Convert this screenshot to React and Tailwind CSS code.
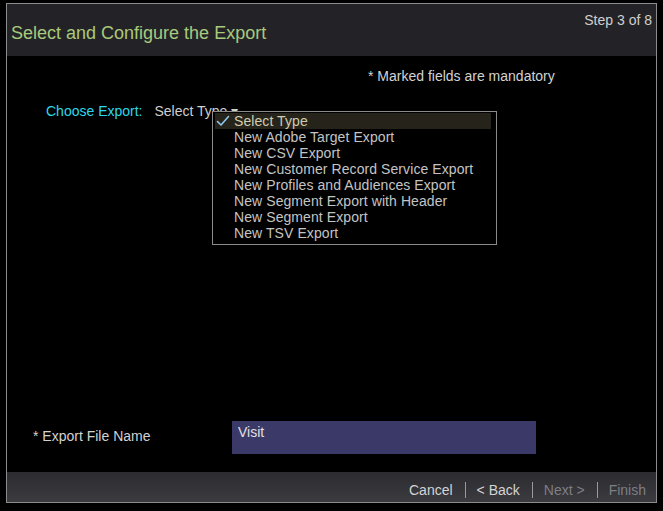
import React from "react";

const exportTypes = [
  "New Adobe Target Export",
  "New CSV Export",
  "New Customer Record Service Export",
  "New Profiles and Audiences Export",
  "New Segment Export with Header",
  "New Segment Export",
  "New TSV Export",
];

const App = () => {
  return (
    <div
      className="w-[663px] h-[511px] bg-black pt-[3px] pl-[6px] overflow-hidden"
      style={{ fontFamily: '"Liberation Sans", Arial, sans-serif' }}
    >
      <div className="w-[651px] h-[500px] border border-[#8c8c8c] flex flex-col">
        {/* Cabeçalho */}
        <div className="h-[52px] bg-[#232327] flex justify-between px-[4px]">
          <div className="text-[18px] leading-[22px] text-[#a9c97c] pt-[18px]">Select and Configure the Export</div>
          <div className="text-[14px] leading-[16px] text-[#cfcfcf] pt-[8px]">Step 3 of 8</div>
        </div>

        {/* Corpo */}
        <div className="flex-1 bg-black relative">
          <div className="text-[14px] leading-[16px] text-[#d2d2d2] pl-[361px] pt-[12px]">* Marked fields are mandatory</div>

          <div className="flex items-center text-[14px] leading-[16px] pl-[39px] mt-[19px]">
            <span className="text-[#2ad8ea]">Choose Export:</span>
            <span className="text-[#cfcfcf] ml-[12px]">Select Type ▾</span>
          </div>

          {/* Menu suspenso */}
          <div className="absolute left-[205px] top-[55px] w-[285px] h-[134px] border border-[#8a8a8a] bg-black py-[1px] pl-[2px] pr-[5px] text-[14px] leading-[16px] tracking-[0.08px]">
            <div className="flex items-center bg-[#26241a] text-[#d0ccb0]">
              <svg className="w-[14px] h-[12px] ml-[1px] mr-[4px]" viewBox="0 0 14 12" fill="none">
                <path d="M1.5 6.5 L5 10 L12.5 1.5" stroke="#8fc8ef" strokeWidth="1.6" strokeLinecap="round" strokeLinejoin="round" />
              </svg>
              <span>Select Type</span>
            </div>
            {exportTypes.map((t) => (
              <div key={t} className="pl-[19px] text-[#c4c4c4]">
                {t}
              </div>
            ))}
          </div>

          <div className="absolute left-0 top-[365px] w-full flex items-start">
            <div className="text-[14px] leading-[16px] text-[#d2d2d2] pl-[26px] pt-[7px] w-[225px]">* Export File Name</div>
            <div className="w-[304px] h-[33px] bg-[#3a3968] text-[14px] leading-[16px] text-[#e0e0e0] px-[6px] pt-[3px]">Visit</div>
          </div>
        </div>

        {/* Rodapé */}
        <div className="h-[30px] bg-gradient-to-b from-[#2b2b30] to-[#3b3b40] flex items-end justify-end pr-[10px] pb-[4px] text-[14px] leading-[16px]">
          <span className="text-[#d4d4d4]">Cancel</span>
          <span className="w-px h-[16px] bg-[#9a9a9a] ml-[12px] mr-[11px]" />
          <span className="text-[#d4d4d4]">&lt; Back</span>
          <span className="w-px h-[16px] bg-[#9a9a9a] ml-[12px] mr-[11px]" />
          <span className="text-[#7e7e84]">Next &gt;</span>
          <span className="w-px h-[16px] bg-[#9a9a9a] ml-[12px] mr-[11px]" />
          <span className="text-[#7e7e84]">Finish</span>
        </div>
      </div>
    </div>
  );
};

export default App;
